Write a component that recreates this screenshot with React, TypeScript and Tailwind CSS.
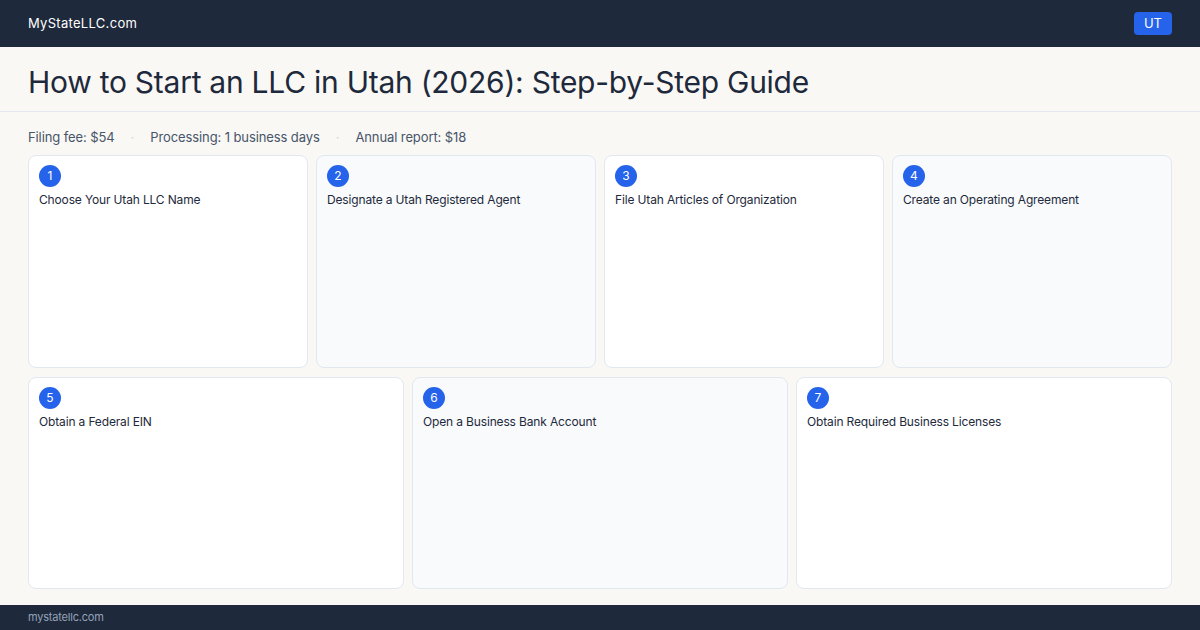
import React from "react";

const steps1 = [
  "Choose Your Utah LLC Name",
  "Designate a Utah Registered Agent",
  "File Utah Articles of Organization",
  "Create an Operating Agreement",
];
const steps2 = [
  "Obtain a Federal EIN",
  "Open a Business Bank Account",
  "Obtain Required Business Licenses",
];

function Card({ n, title }: { n: number; title: string }) {
  const alt = n % 2 === 0;
  return (
    <div
      className={`flex flex-col rounded-lg border border-[#e2e8f0] px-[10px] pt-[9px] ${
        alt ? "bg-[#f8fafc]" : "bg-white"
      }`}
    >
      <div className="flex h-[22px] w-[22px] items-center justify-center rounded-full bg-[#2563eb] text-[12px] text-white">
        {n}
      </div>
      <div className="mt-[5px] text-[12px] leading-[16px] tracking-[-0.15px] text-[#1e293b]">
        {title}
      </div>
    </div>
  );
}

export default function App() {
  return (
    <div
      className="flex h-[630px] w-[1200px] flex-col bg-[#f9f8f5]"
      style={{ fontFamily: "Inter, 'Noto Sans', sans-serif" }}
    >
      <header className="flex h-[47px] items-center justify-between bg-[#1e293b] px-[28px]">
        <span className="text-[13px] tracking-[0.3px] text-white">MyStateLLC.com</span>
        <span className="flex h-[23px] items-center rounded-[4px] bg-[#2563eb] px-[10px] text-[13px] text-white">
          UT
        </span>
      </header>
      <div className="flex h-[65px] items-center border-b border-[#e2e8f0] px-[28px] pt-[5px]">
        <h1 className="text-[30px] leading-none tracking-[-0.26px] text-[#1e293b]">
          How to Start an LLC in Utah (2026): Step-by-Step Guide
        </h1>
      </div>
      <main className="flex flex-1 flex-col px-[28px] pb-[16px] pt-[17px]">
        <div className="flex items-center gap-[16px] text-[13px] leading-[16px] tracking-[-0.1px] text-[#475569]">
          <span>Filing fee: $54</span>
          <span className="text-[#cbd5e1]">·</span>
          <span>Processing: 1 business days</span>
          <span className="text-[#cbd5e1]">·</span>
          <span>Annual report: $18</span>
        </div>
        <div className="mt-[10px] flex flex-1 flex-col gap-[9px]">
          <div className="grid flex-1 grid-cols-4 gap-[8px]">
            {steps1.map((t, i) => (
              <Card key={t} n={i + 1} title={t} />
            ))}
          </div>
          <div className="grid flex-1 grid-cols-3 gap-[8px]">
            {steps2.map((t, i) => (
              <Card key={t} n={i + 5} title={t} />
            ))}
          </div>
        </div>
      </main>
      <footer className="flex h-[25px] items-center bg-[#1e293b] px-[28px] text-[11px] tracking-[-0.2px] text-[#94a3b8]">
        mystatellc.com
      </footer>
    </div>
  );
}
